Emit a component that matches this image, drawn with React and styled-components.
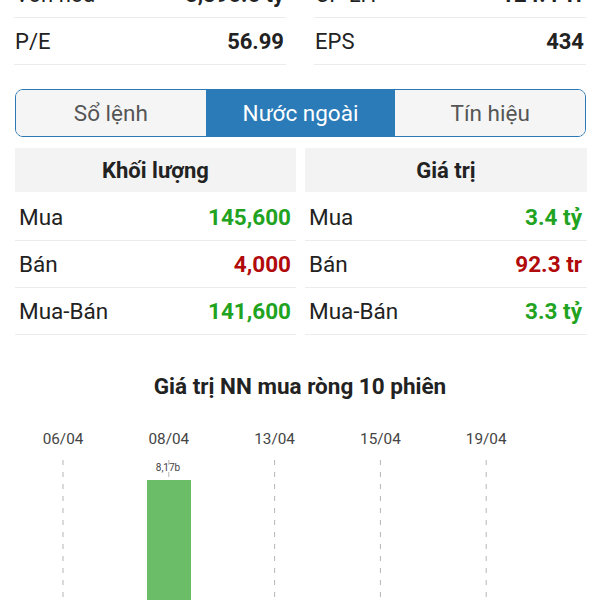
import React from 'react'
import styled, { createGlobalStyle } from 'styled-components'

const Global = createGlobalStyle`
    html, body { margin: 0; padding: 0; background: #fff; overflow: hidden; }
    body { font-family: Roboto, "Noto Sans", "Liberation Sans", sans-serif; color: #222; }
`

const Page = styled.div`
    width: 600px;
    height: 600px;
    overflow: hidden;
`
const Scroller = styled.div`
    margin-top: -29px;
`

// stats
const StatGrid = styled.div`
    display: grid;
    grid-template-columns: 272px 272px;
    column-gap: 28px;
    padding: 0 14px 0 14px;
`
const StatRow = styled.div`
    display: flex;
    align-items: center;
    justify-content: space-between;
    height: 46px;
    border-bottom: 1px solid #ececec;
    padding: 0 2px 0 1px;
    font-size: 22px;
`
const StatLabel = styled.span`
    font-weight: 400;
`
const StatValue = styled.span`
    font-weight: 700;
`

// tabs
const Tabs = styled.div`
    display: flex;
    margin: 24px 14px 0 15px;
    height: 46px;
    border: 1px solid #2a78b6;
    border-radius: 8px;
    overflow: hidden;
`
const Tab = styled.div`
    flex: 1;
    display: flex;
    align-items: center;
    justify-content: center;
    font-size: 22.5px;
    font-weight: 400;
    background: ${p => p.$active ? '#2a7bb8' : '#f5f5f5'};
    color: ${p => p.$active ? '#fff' : '#555'};
`

// foreign table
const Tables = styled.div`
    display: grid;
    grid-template-columns: 281px 282px;
    column-gap: 9px;
    margin: 11px 14px 0 15px;
`
const Col = styled.div`
    display: flex;
    flex-direction: column;
`
const Head = styled.div`
    height: 44px;
    display: flex;
    align-items: center;
    justify-content: center;
    background: #f3f3f3;
    font-size: 22px;
    font-weight: 700;
    margin-bottom: 2px;
`
const Row = styled.div`
    display: flex;
    align-items: center;
    justify-content: space-between;
    height: 46px;
    border-bottom: 1px solid #ececec;
    padding: 0 5px 0 4px;
    font-size: 22.5px;
`
const Value = styled.span`
    font-weight: 700;
    color: ${p => p.$up ? '#21a321' : '#b10a0a'};
`

// chart
const ChartTitle = styled.div`
    margin-top: 38px;
    text-align: center;
    font-size: 22.5px;
    font-weight: 700;
    color: #222;
`
const ChartSvg = styled.svg`
    display: block;
    margin-top: 15px;
`

const stats = [
    [['Vốn hoá', '5,396.6 tỷ'], ['CP LH', '124.4 Tr']],
    [['P/E', '56.99'], ['EPS', '434']],
]

const volume = [
    ['Mua', '145,600', true],
    ['Bán', '4,000', false],
    ['Mua-Bán', '141,600', true],
]
const value = [
    ['Mua', '3.4 tỷ', true],
    ['Bán', '92.3 tr', false],
    ['Mua-Bán', '3.3 tỷ', true],
]

const dates = ['06/04', '08/04', '13/04', '15/04', '19/04']

const Chart = () => {
    const xs = dates.map((_, i) => 63 + i * 105.8)
    return (
        <ChartSvg width="600" height="200" viewBox="0 0 600 200">
            {dates.map((d, i) => (
                <g key={d}>
                    <text x={xs[i]} y="30" textAnchor="middle" fontSize="15.3" fill="#444"
                        fontFamily="Roboto, sans-serif">{d}</text>
                    <line x1={xs[i]} x2={xs[i]} y1="46" y2="200" stroke="#b5b5b5"
                        strokeWidth="1" strokeDasharray="5 7" />
                </g>
            ))}
            <rect x="147" y="66" width="44" height="140" fill="#6cbd68" />
            <text x="168" y="57" textAnchor="middle" fontSize="10" fill="#444"
                fontFamily="Roboto, sans-serif">8,17b</text>
        </ChartSvg>
    )
}

const App = () => {
    return (
        <Page>
            <Global />
            <Scroller>
                {stats.map((pair, i) => (
                    <StatGrid key={i}>
                        {pair.map(([l, v]) => (
                            <StatRow key={l}>
                                <StatLabel>{l}</StatLabel>
                                <StatValue>{v}</StatValue>
                            </StatRow>
                        ))}
                    </StatGrid>
                ))}
                <Tabs>
                    <Tab>Sổ lệnh</Tab>
                    <Tab $active>Nước ngoài</Tab>
                    <Tab>Tín hiệu</Tab>
                </Tabs>
                <Tables>
                    <Col>
                        <Head>Khối lượng</Head>
                        {volume.map(([l, v, up]) => (
                            <Row key={l}><span>{l}</span><Value $up={up}>{v}</Value></Row>
                        ))}
                    </Col>
                    <Col>
                        <Head>Giá trị</Head>
                        {value.map(([l, v, up]) => (
                            <Row key={l}><span>{l}</span><Value $up={up}>{v}</Value></Row>
                        ))}
                    </Col>
                </Tables>
                <ChartTitle>Giá trị NN mua ròng 10 phiên</ChartTitle>
                <Chart />
            </Scroller>
        </Page>
    )
}

export default App
